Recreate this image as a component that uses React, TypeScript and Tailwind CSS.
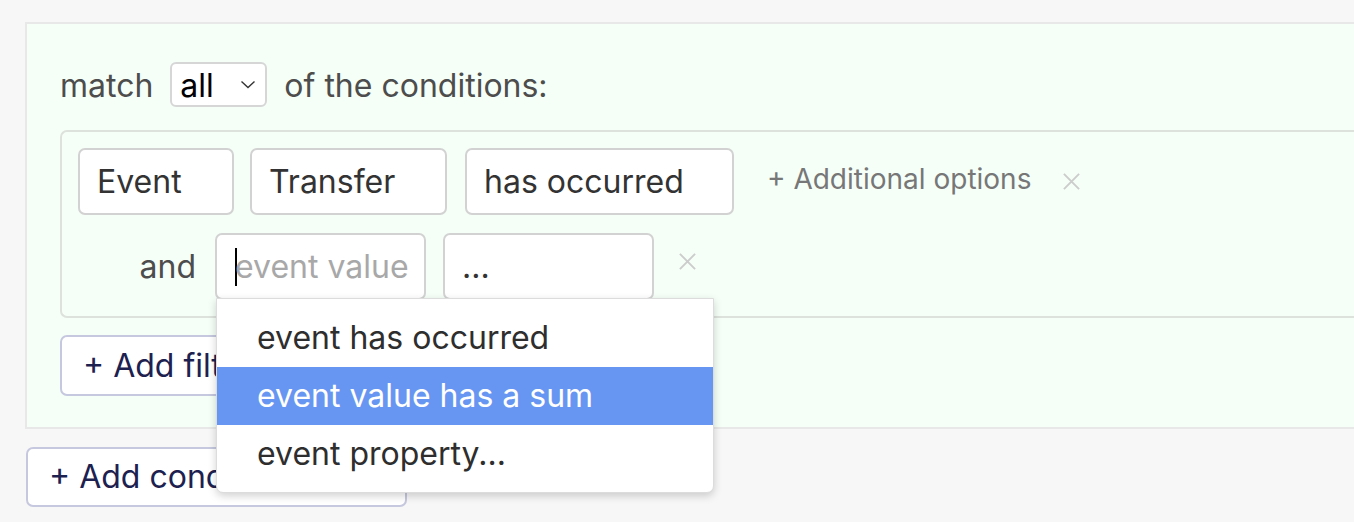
import React from "react";

const font = { fontFamily: "Inter, 'Noto Sans', sans-serif" };

function XIcon({ className }: { className?: string }) {
  return (
    <svg viewBox="0 0 20 20" className={className} fill="none" stroke="currentColor" strokeWidth="2">
      <path d="M2 2 L18 18 M18 2 L2 18" />
    </svg>
  );
}

function Box({ width, children }: { width: string; children: React.ReactNode }) {
  return (
    <div
      className={`${width} h-[67px] flex items-center px-[17px] bg-white border-2 border-[#d2d2d2] rounded-[7px] text-[32px] text-[#333] whitespace-nowrap overflow-hidden`}
    >
      {children}
    </div>
  );
}

export default function App() {
  return (
    <div className="w-[1354px] h-[522px] overflow-hidden bg-[#f7f7f7] pt-[22px] pl-[25px] relative" style={font}>
      {/* condition panel */}
      <div className="w-[1400px] bg-[#f5fff7] border-2 border-[#e8e8e8] pt-[38px] pl-[33px] pb-[31px]">
        <div className="flex items-center h-[45px] text-[32px] text-[#4d4d4d]">
          <span className="mt-[2px]">match</span>
          <div className="ml-[17px] mr-[17px] w-[97px] h-[45px] bg-white border-2 border-[#d6d6d6] rounded-[6px] flex items-center pl-[8px] pr-[9px] justify-between text-black">
            <span className="mt-[2px]">all</span>
            <svg viewBox="0 0 16 9" className="w-[16px] h-[9px] shrink-0" fill="none" stroke="#333" strokeWidth="1.4">
              <path d="M1.5 1.5 L8 7.5 L14.5 1.5" />
            </svg>
          </div>
          <span className="mt-[2px]">of the conditions:</span>
        </div>

        {/* filters box */}
        <div className="mt-[23px] border-2 border-r-0 border-[#dde2dd] rounded-l-[7px] p-[16px] flex flex-col gap-[18px]">
          <div className="flex items-center">
            <Box width="w-[156px]">Event</Box>
            <div className="ml-[16px]">
              <Box width="w-[197px]">Transfer</Box>
            </div>
            <div className="ml-[18px]">
              <Box width="w-[269px]">has occurred</Box>
            </div>
            <span className="ml-[33px] text-[28px] text-[#777] mb-[6px] whitespace-nowrap">+ Additional options</span>
            <XIcon className="ml-[31px] w-[19px] h-[19px] shrink-0 text-[#cccccc]" />
          </div>
          <div className="flex items-center">
            <span className="w-[118px] text-right text-[32px] text-[#4d4d4d]">and</span>
            <div className="ml-[19px]">
              <div className="w-[211px] h-[67px] flex items-center pl-[18px] bg-white border-2 border-[#d2d2d2] rounded-[7px] text-[32px] whitespace-nowrap overflow-hidden">
                <span className="w-[2px] h-[38px] bg-black mr-[-2px] shrink-0" />
                <span className="text-[#a8a8a8]">event value</span>
              </div>
            </div>
            <div className="ml-[17px]">
              <Box width="w-[211px]">...</Box>
            </div>
            <XIcon className="ml-[24px] mb-[10px] w-[19px] h-[19px] shrink-0 text-[#cccccc]" />
          </div>
        </div>

        <button className="mt-[17px] h-[61px] w-[320px] bg-white border-2 border-[#c5c8de] rounded-[7px] text-left pl-[21px] text-[32px] text-[#1d2150]">
          + Add filter
        </button>
      </div>

      <button className="mt-[18px] ml-[1px] h-[60px] w-[381px] bg-white border-2 border-[#c5c8de] rounded-[7px] text-left pl-[21px] text-[32px] text-[#1d2150]">
        + Add condition
      </button>

      {/* dropdown menu */}
      <div className="absolute left-[216px] top-[298px] w-[498px] h-[195px] bg-white border border-[#dcdcdc] rounded-b-[7px] shadow-[0_3px_8px_rgba(0,0,0,0.18)] pt-[10px] text-[32px] text-[#2e2e2e]">
        <div className="h-[58px] flex items-center pl-[40px]">event has occurred</div>
        <div className="h-[58px] flex items-center pl-[40px] bg-[#6796f2] text-white">event value has a sum</div>
        <div className="h-[58px] flex items-center pl-[40px]">event property...</div>
      </div>
    </div>
  );
}
